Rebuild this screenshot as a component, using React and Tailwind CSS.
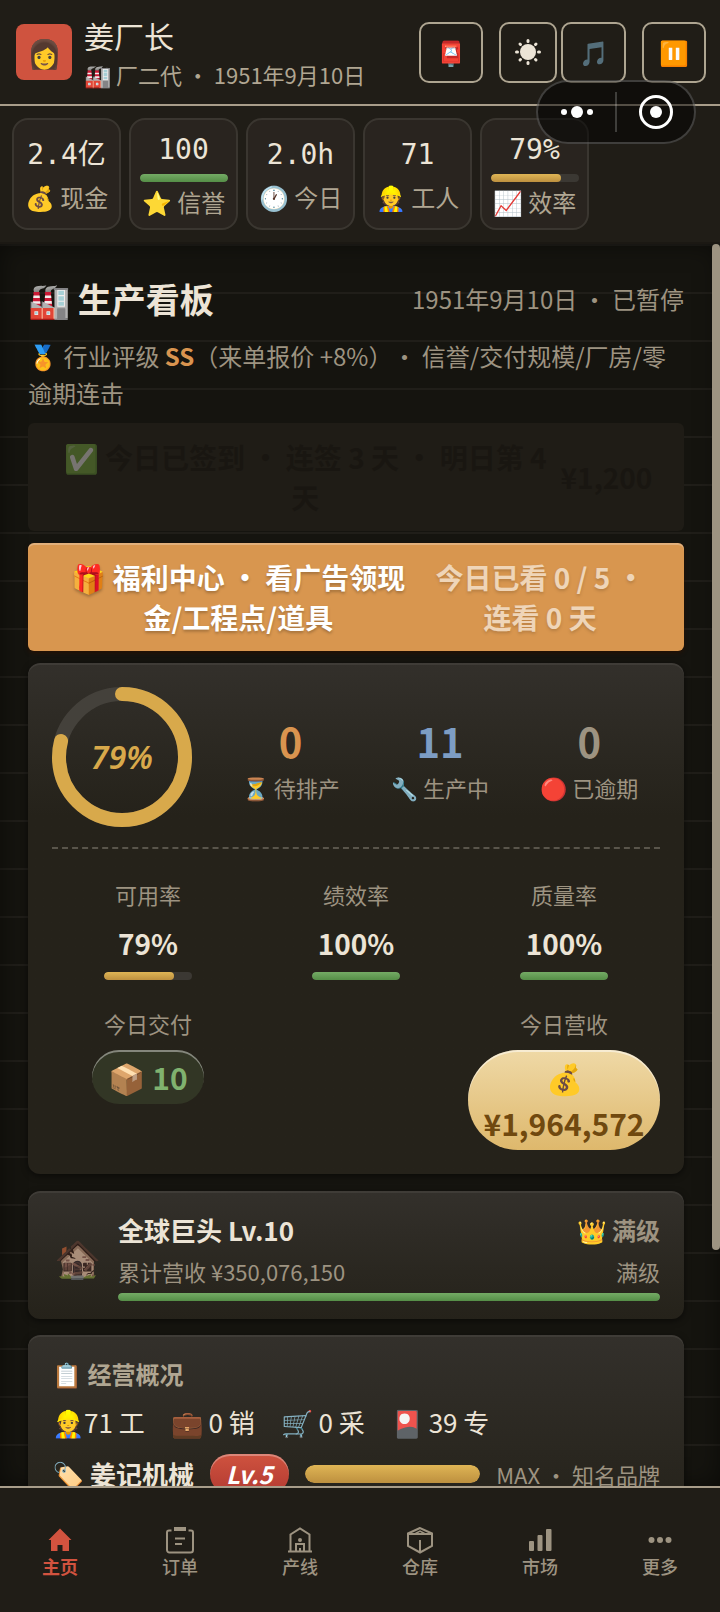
import clsx from 'clsx'

const stats = [
  { value: '2.4亿', icon: '💰', label: '现金' },
  { value: '100', icon: '⭐', label: '信誉', percent: 100, tone: 'green' },
  { value: '2.0h', icon: '🕐', label: '今日' },
  { value: '71', icon: '👷', label: '工人' },
  { value: '79%', icon: '📈', label: '效率', percent: 80, tone: 'gold' },
]

const orderCounts = [
  { value: 0, icon: '⏳', label: '待排产', color: 'text-[#d9944f]' },
  { value: 11, icon: '🔧', label: '生产中', color: 'text-[#7d9dc4]' },
  { value: 0, icon: '🔴', label: '已逾期', color: 'text-[#9d9381]' },
]

const rates = [
  { label: '可用率', value: 79, tone: 'gold' },
  { label: '绩效率', value: 100, tone: 'green' },
  { label: '质量率', value: 100, tone: 'green' },
]

const staff = ['👷71 工', '💼 0 销', '🛒 0 采', '🎴 39 专']

const tabs = [
  { label: '主页', icon: HomeIcon, active: true },
  { label: '订单', icon: OrdersIcon },
  { label: '产线', icon: LineIcon },
  { label: '仓库', icon: WarehouseIcon },
  { label: '市场', icon: MarketIcon },
  { label: '更多', icon: MoreIcon },
]

function HomeIcon() {
  return (
    <svg viewBox="0 0 28 28" className="size-7" fill="currentColor" aria-hidden="true">
      <path d="M14 2.500 2.500 14H5v11h6.500v-6h5v6H23V14h2.500z" />
    </svg>
  )
}

function OrdersIcon() {
  return (
    <svg viewBox="0 0 28 28" className="size-7" fill="none" stroke="currentColor" strokeWidth="2" aria-hidden="true">
      <path d="M5.500 4.500H3a2 2 0 0 0-2 2V24a2.500 2.500 0 0 0 2.500 2.500h21A2.500 2.500 0 0 0 27 24V6.500a2 2 0 0 0-2-2h-2.500M9 12.500h10M9 18h7" />
      <path d="M8 3h12" strokeWidth="4" />
    </svg>
  )
}

function LineIcon() {
  return (
    <svg viewBox="0 0 28 28" className="size-7" fill="none" stroke="currentColor" strokeWidth="2" aria-hidden="true">
      <path d="M2 25.500h24M4.500 25V8.500L14 2.500l9.500 6V25M10 25v-7h8v7M14 22v3" />
      <circle cx="14" cy="14" r="2" fill="currentColor" stroke="none" />
    </svg>
  )
}

function WarehouseIcon() {
  return (
    <svg viewBox="0 0 28 28" className="size-7" fill="none" stroke="currentColor" strokeWidth="2" aria-hidden="true">
      <path d="M14 2 2 7.500V20l12 6.500L26 20V7.500zM2 8h24M14 14v12" />
      <path d="M9.500 7.500 14 5l4.500 2.500" strokeWidth="1.500" />
    </svg>
  )
}

function MarketIcon() {
  return (
    <svg viewBox="0 0 28 28" className="size-7" fill="currentColor" aria-hidden="true">
      <rect x="3" y="15" width="5" height="10" rx="1" />
      <rect x="11.500" y="9" width="5" height="16" rx="1" />
      <rect x="20" y="3" width="5.500" height="22" rx="1" />
    </svg>
  )
}

function MoreIcon() {
  return (
    <svg viewBox="0 0 28 28" className="size-7" fill="currentColor" aria-hidden="true">
      <circle cx="5.500" cy="14" r="3" />
      <circle cx="14" cy="14" r="3" />
      <circle cx="22.500" cy="14" r="3" />
    </svg>
  )
}

function SunIcon() {
  return (
    <svg viewBox="0 0 26 26" className="w-[26px]" fill="none" aria-hidden="true">
      <circle cx="13" cy="13" r="8" fill="#ece4d6" />
      <path
        d="M13 1.500v1M13 23.500v1M1.500 13h1M23.500 13h1M5 5l.5.5M20.500 20.500l.5.5M5 21l.5-.5M20.500 5.500l.5-.5"
        stroke="#ece4d6"
        strokeWidth="3"
        strokeLinecap="round"
      />
    </svg>
  )
}

function Bar({ percent, tone, className }) {
  return (
    <div
      className={clsx('overflow-hidden rounded-full bg-[#3b3833]', className)}
      role="progressbar"
      aria-valuenow={percent}
    >
      <div
        className={clsx(
          'h-full rounded-full bg-linear-to-b',
          tone === 'gold' ? 'from-[#dfb555] to-[#bd903f]' : 'from-[#74ab65] to-[#558e47]'
        )}
        style={{ width: `${percent}%` }}
      />
    </div>
  )
}

function ToolButton({ label, className, children }) {
  return (
    <button
      type="button"
      aria-label={label}
      className={clsx(
        'flex h-[61px] items-center justify-center rounded-[10px] border-2 border-[#aea591] text-2xl',
        className
      )}
    >
      {children}
    </button>
  )
}

function Card({ className, children }) {
  return (
    <section
      className={clsx(
        'rounded-xl bg-[#25221a] bg-linear-to-b from-[#33302b] to-[#25221a] shadow-[inset_0_2px_0_rgba(255,255,255,0.06),0_2px_6px_rgba(0,0,0,0.5)]',
        className
      )}
    >
      {children}
    </section>
  )
}

function Ring({ percent }) {
  const length = 2 * Math.PI * 63
  return (
    <div className="grid size-[140px] shrink-0 place-items-center">
      <svg viewBox="0 0 140 140" className="col-start-1 row-start-1 size-full -rotate-90" fill="none" strokeWidth="14">
        <circle cx="70" cy="70" r="63" stroke="#44413b" />
        <circle
          cx="70"
          cy="70"
          r="63"
          stroke="#d8a94b"
          strokeLinecap="round"
          strokeDasharray={`${(length * percent) / 100} ${length}`}
        />
      </svg>
      <span className="col-start-1 row-start-1 font-['Noto_Sans',sans-serif] text-[32px] font-semibold italic text-[#d8a94b]">
        {percent}%
      </span>
    </div>
  )
}

function Header() {
  return (
    <header className="flex h-[106px] shrink-0 items-center border-b-2 border-[#a89d8a] pl-4 pr-3.5">
      <div className="flex size-14 items-center justify-center rounded-lg bg-[#cf533f] text-[28px]">👩</div>
      <div className="ml-3 pt-0.5">
        <h1 className="text-[30px] leading-[42px] text-[#ece4d6]">姜厂长</h1>
        <p className="whitespace-nowrap text-[22px] leading-9 text-[#b0a692]">🏭 厂二代 · 1951年9月10日</p>
      </div>
      <div className="ml-auto flex">
        <ToolButton label="信箱" className="w-16">📮</ToolButton>
        <ToolButton label="主题" className="ml-4 w-[58px]"><SunIcon /></ToolButton>
        <ToolButton label="音乐" className="ml-1 w-[65px]">🎵</ToolButton>
        <ToolButton label="暂停" className="ml-4 w-16">⏸️</ToolButton>
      </div>
    </header>
  )
}

function Capsule() {
  return (
    <div className="absolute right-6 top-20 flex h-16 w-40 items-center rounded-full border-2 border-white/20 bg-black/50">
      <button type="button" aria-label="菜单" className="flex flex-1 items-center justify-center gap-1">
        <span className="size-1.5 rounded-full bg-white" />
        <span className="size-3 rounded-full bg-white" />
        <span className="size-1.5 rounded-full bg-white" />
      </button>
      <span className="h-10 w-0.5 bg-white/20" />
      <button type="button" aria-label="关闭" className="flex flex-1 justify-center">
        <span className="flex size-[34px] items-center justify-center rounded-full border-3 border-white">
          <span className="size-3 rounded-full bg-white" />
        </span>
      </button>
    </div>
  )
}

function StatBar() {
  return (
    <div className="flex shrink-0 gap-2 border-b-2 border-[#1b1813] p-3">
      {stats.map((s) => (
        <div
          key={s.label}
          className="flex h-28 w-[109px] flex-col items-center justify-center gap-0.5 whitespace-nowrap rounded-2xl border-2 border-[#3a3630] bg-[#29241f]"
        >
          <div className="font-['DejaVu_Sans_Mono','Noto_Sans_CJK_SC',monospace] text-[28px] leading-[44px] text-[#ece4d6]">
            {s.value}
          </div>
          {s.percent && <Bar percent={s.percent} tone={s.tone} className="h-2 w-[88px] shrink-0" />}
          <div className="text-2xl leading-9 text-[#b0a692]">
            {s.icon} {s.label}
          </div>
        </div>
      ))}
    </div>
  )
}

function Overview() {
  return (
    <Card className="mt-3 from-0% to-30% p-6">
      <div className="flex items-center">
        <Ring percent={79} />
        <div className="ml-[30px] grid flex-1 grid-cols-3 gap-3 pr-0.5 pt-2 text-center">
          {orderCounts.map((o) => (
            <div key={o.label} className="whitespace-nowrap">
              <div className={clsx('text-[40px] font-bold leading-[52px]', o.color)}>{o.value}</div>
              <div className="text-[22px] leading-10 text-[#9d9381]">
                {o.icon} {o.label}
              </div>
            </div>
          ))}
        </div>
      </div>
      <div className="mt-5 grid grid-cols-3 gap-x-4 gap-y-[27px] border-t-2 border-dashed border-[#59554b] pt-[29px]">
        {rates.map((r) => (
          <div key={r.label} className="flex flex-col items-center gap-[7px]">
            <span className="mb-1 text-[22px] leading-8 text-[#9d9381]">{r.label}</span>
            <span className="text-[28px] font-bold leading-[44px] text-[#ece4d6]">{r.value}%</span>
            <Bar percent={r.value} tone={r.tone} className="h-2 w-[88px]" />
          </div>
        ))}
        <div className="flex flex-col items-center gap-[7px]">
          <span className="mb-1 text-[22px] leading-8 text-[#9d9381]">今日交付</span>
          <span className="rounded-full bg-[#323625] px-4 py-1 text-[30px] font-bold leading-[46px] text-[#80b26f] shadow-[inset_0_2px_0_rgba(255,255,255,0.4)]">
            📦 10
          </span>
        </div>
        <div className="col-start-3 flex flex-col items-center gap-[7px]">
          <span className="mb-1 text-[22px] leading-8 text-[#9d9381]">今日营收</span>
          <span className="w-full rounded-[50px] bg-linear-to-b from-[#efd9a6] to-[#deb86c] py-1 text-center text-[30px] font-bold leading-[46px] text-[#70490f] shadow-[inset_0_2px_0_rgba(255,255,255,0.5)]">
            💰
            <br />
            ¥1,964,572
          </span>
        </div>
      </div>
    </Card>
  )
}

function LevelCard() {
  return (
    <Card className="mt-[17px] flex items-center gap-4 px-6 py-[18px]">
      <div className="w-[50px] text-center text-[38px] opacity-80">🏚️</div>
      <div className="flex-1">
        <div className="flex items-center justify-between leading-[42px]">
          <h3 className="text-[26px] font-bold text-[#ece4d6]">全球巨头 Lv.10</h3>
          <span className="text-2xl font-bold leading-[42px] text-[#9d9381]">👑 满级</span>
        </div>
        <div className="mt-1 flex justify-between text-[22px] leading-8 text-[#9d9381]">
          <span>累计营收 ¥350,076,150</span>
          <span>满级</span>
        </div>
        <Bar percent={100} tone="green" className="mt-1.5 h-2" />
      </div>
    </Card>
  )
}

function BusinessCard() {
  return (
    <Card className="mt-4 px-6 pb-6 pt-[19px]">
      <h3 className="text-2xl font-bold leading-10 text-[#b0a692]">📋 经营概况</h3>
      <div className="mt-2 flex gap-[26px] text-[26px] leading-10 text-[#ece4d6]">
        {staff.map((item) => (
          <span key={item}>{item}</span>
        ))}
      </div>
      <div className="mt-3 flex items-center gap-4 whitespace-nowrap">
        <span className="text-[26px] font-bold leading-10 text-[#ece4d6]">🏷️ 姜记机械</span>
        <span className="rounded-full bg-linear-to-b from-[#cf533f] to-[#b33a32] px-4 text-2xl font-bold italic leading-10 text-white shadow-[inset_0_2px_0_rgba(255,255,255,0.3)]">
          Lv.5
        </span>
        <Bar percent={100} tone="gold" className="h-[18px] flex-1" />
        <span className="text-[22px] leading-10 text-[#9d9381]">MAX · 知名品牌</span>
      </div>
    </Card>
  )
}

function TabBar() {
  return (
    <nav className="grid h-[126px] shrink-0 grid-cols-6 border-t-2 border-[#a89d8a]">
      {tabs.map(({ label, icon: Icon, active }) => (
        <button
          key={label}
          type="button"
          className={clsx(
            'flex flex-col items-center justify-center pt-1 text-lg leading-6',
            active ? 'font-bold text-[#d2533f]' : 'font-medium text-[#9d9381]'
          )}
        >
          <Icon />
          {label}
        </button>
      ))}
    </nav>
  )
}

export default function App() {
  return (
    <div
      lang="zh-CN"
      className="relative flex h-screen flex-col overflow-hidden bg-[#201d17] font-['Noto_Sans_CJK_SC',sans-serif]"
    >
      <Header />
      <StatBar />
      <div className="flex min-h-0 flex-1 bg-[#15140f] bg-[repeating-linear-gradient(to_bottom,#201e19_0px,#201e19_2px,transparent_2px,transparent_48px)] shadow-[inset_0_0_24px_rgba(0,0,0,0.5)]">
        <main className="min-w-0 flex-1 overflow-hidden px-7 pt-[30px]">
          <div className="flex items-center justify-between">
            <h2 className="text-[34px] font-bold leading-[50px] text-[#ece4d6]">🏭 生产看板</h2>
            <span className="text-2xl text-[#9d9381]">1951年9月10日 · 已暂停</span>
          </div>
          <p className="mt-[13px] text-2xl leading-[37px] text-[#9d9381] [text-spacing-trim:space-all]">
            🏅 行业评级 <b className="text-[#d9944f]">SS</b>（来单报价 +8%）· 信誉/交付规模/厂房/零逾期连击
          </p>
          <button
            type="button"
            disabled
            className="mt-3 flex w-full items-center justify-center gap-3.5 rounded-md bg-[#1f1c16] py-3.5 pl-1 text-[28px] font-bold leading-10 text-[#191611]"
          >
            <span>
              <span className="opacity-40">✅</span> 今日已签到 · 连签 3 天 · 明日第 4
              <br />天
            </span>
            <span>¥1,200</span>
          </button>
          <button
            type="button"
            className="mt-3 flex w-full items-center justify-center gap-[30px] rounded-md bg-[#d8964f] py-3.5 pl-1 text-[28px] font-bold leading-10 text-white shadow-[inset_0_2px_0_rgba(255,255,255,0.25),0_2px_4px_rgba(40,16,0,0.8)] [text-shadow:0_2px_3px_rgba(0,0,0,0.25)]"
          >
            <span>
              🎁 福利中心 · 看广告领现
              <br />
              金/工程点/道具
            </span>
            <span className="opacity-60">
              今日已看 0 / 5 ·
              <br />
              连看 0 天
            </span>
          </button>
          <Overview />
          <LevelCard />
          <BusinessCard />
        </main>
        <div className="w-2 shrink-0">
          <div className="h-[81%] rounded-full bg-[#9d9381]" />
        </div>
      </div>
      <TabBar />
      <Capsule />
    </div>
  )
}
